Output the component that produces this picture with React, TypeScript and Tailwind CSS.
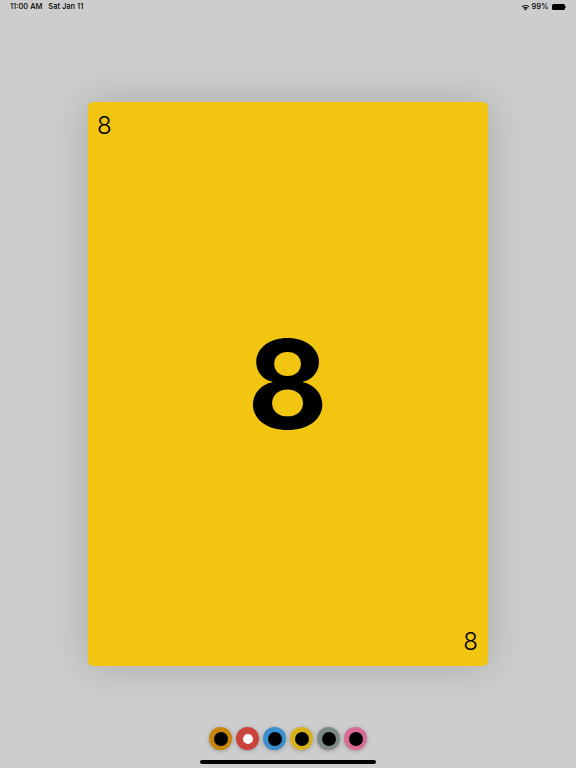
import React from "react";

const rings = [
  { ring: "#c8860c", inner: "#000000", size: 14 },
  { ring: "#c9453b", inner: "#ffffff", size: 10 },
  { ring: "#3a8ecf", inner: "#000000", size: 14 },
  { ring: "#d8b21c", inner: "#000000", size: 14 },
  { ring: "#7d8a8a", inner: "#000000", size: 14 },
  { ring: "#d86c96", inner: "#000000", size: 14 },
];

export default function App() {
  return (
    <div
      className="w-[576px] h-[768px] bg-[#cdcdcd] flex flex-col items-center overflow-hidden"
      style={{ fontFamily: "Inter, 'Noto Sans', sans-serif" }}
    >
      {/* status bar */}
      <div className="w-full h-[14px] flex items-center justify-between px-[10px] text-[7.5px] font-medium text-black">
        <div className="flex gap-[6px]">
          <span>11:00 AM</span>
          <span>Sat Jan 11</span>
        </div>
        <div className="flex items-center gap-[2px]">
          <svg width="9" height="7" viewBox="0 0 12 9">
            <path d="M6 8.5 L8 6.3 A3 3 0 0 0 4 6.3 Z" fill="#000" />
            <path d="M2.6 5 A5 5 0 0 1 9.4 5 L8.6 5.9 A3.8 3.8 0 0 0 3.4 5.9 Z" fill="#000" />
            <path d="M1 3.3 A7.3 7.3 0 0 1 11 3.3 L10.2 4.2 A6.1 6.1 0 0 0 1.8 4.2 Z" fill="#000" />
          </svg>
          <span>99%</span>
          <div className="flex items-center ml-[1px]">
            <div className="w-[13px] h-[6px] rounded-[1.5px] bg-black" />
            <div className="w-[1px] h-[2px] bg-black/50 ml-[0.5px]" />
          </div>
        </div>
      </div>

      {/* card */}
      <div className="mt-[88px] w-[400px] h-[564px] bg-[#f2c511] rounded-[5px] shadow-[0_0_40px_rgba(0,0,0,0.18)] flex flex-col justify-between pt-[12px] pb-[12px] pl-[9px] pr-[10px] text-black">
        <div className="text-[24px] leading-[24px] font-light self-start">8</div>
        <div className="text-[124px] leading-none font-bold self-center">8</div>
        <div className="text-[24px] leading-[24px] font-light self-end">8</div>
      </div>

      {/* color picker */}
      <div className="mt-[61px] flex gap-[4px]">
        {rings.map((r, i) => (
          <div
            key={i}
            className="w-[23px] h-[23px] rounded-full flex items-center justify-center shadow-[0_1px_4px_rgba(0,0,0,0.25)]"
            style={{ backgroundColor: r.ring }}
          >
            <div
              className="rounded-full"
              style={{ backgroundColor: r.inner, width: r.size, height: r.size }}
            />
          </div>
        ))}
      </div>

      {/* home indicator */}
      <div className="mt-[10px] w-[176px] h-[3.5px] rounded-full bg-black" />
    </div>
  );
}
